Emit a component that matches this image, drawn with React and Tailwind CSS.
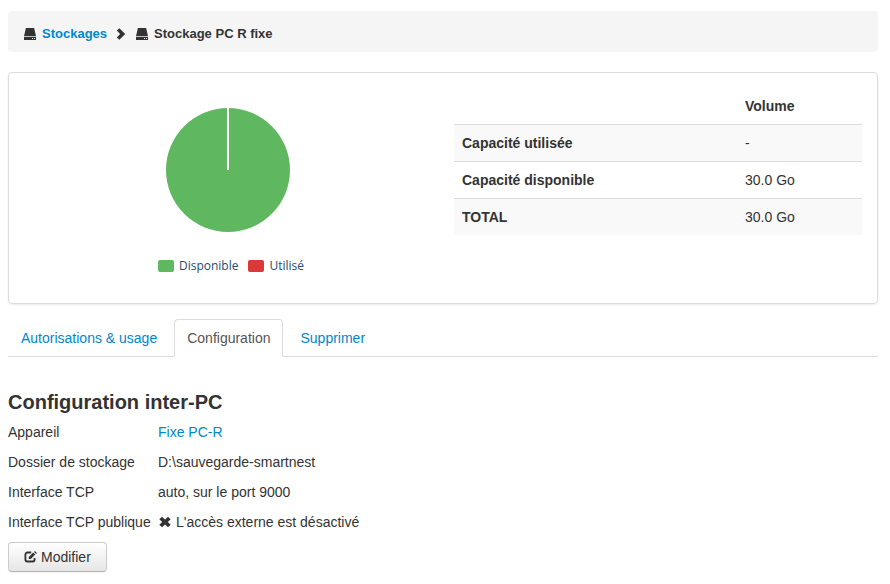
const SERIES = [
  { label: 'Disponible', swatch: 'bg-[#5fb760]' },
  { label: 'Utilisé', swatch: 'bg-[#db3838]' },
];

const VOLUMES = [
  { label: 'Capacité utilisée', value: '-' },
  { label: 'Capacité disponible', value: '30.0 Go' },
  { label: 'TOTAL', value: '30.0 Go' },
];

const TABS = [
  { label: 'Autorisations & usage', href: '#usage' },
  { label: 'Configuration', href: '#configuration', active: true },
  { label: 'Supprimer', href: '#supprimer' },
];

function DriveIcon() {
  return (
    <svg viewBox="0 0 12 12" className="h-3 w-3 shrink-0" fill="#333" aria-hidden="true">
      <path d="M1.9 0h8.2L12 8.2H0z" />
      <path fillRule="evenodd" d="M0 9h12v3H0zM8 10v1h1v-1zM10 10v1h1v-1z" />
    </svg>
  );
}

function ChevronIcon() {
  return (
    <svg viewBox="0 0 10 12" className="h-3 w-[10px] shrink-0" fill="#333" aria-hidden="true">
      <path d="M.8 2.6 3.4.2 9.2 6l-5.8 5.8L.8 9.4 4.1 6z" />
    </svg>
  );
}

function CrossIcon() {
  return (
    <svg viewBox="0 0 13 12" className="h-3 w-[13px] shrink-0" fill="#333" aria-hidden="true">
      <path d="M4 .7 7 3.5 10 .7l2.7 2.5L9.8 6l2.9 2.8-2.7 2.5-3-2.8-3 2.8-2.7-2.5L4.2 6 1.3 3.2z" />
    </svg>
  );
}

function EditIcon() {
  return (
    <svg viewBox="0 0 13 12" className="h-3 w-[13px] shrink-0" aria-hidden="true">
      <path
        d="M7.2 1.5H3.4a2 2 0 0 0-2 2v5a2 2 0 0 0 2 2h5.2a2 2 0 0 0 2-2V7"
        fill="none"
        stroke="#333"
        strokeWidth="1.8"
      />
      <path d="M4.8 8.1V6l4.4-4.4 2 2-4.4 4.5zM10.1.9l.8-.8 2 2-.8.8z" fill="#333" />
    </svg>
  );
}

function UsagePie() {
  return (
    <svg viewBox="0 0 124 124" className="h-[124px] w-[124px]" role="img" aria-label="Disponible : 100 %">
      <circle cx="62" cy="62" r="62" fill="#5fb760" />
      <path d="M62 0v62" stroke="#fff" strokeWidth="2" />
    </svg>
  );
}

function ConfigRow({ label, children }) {
  return (
    <div className="flex h-[30px] items-center">
      <dt className="w-[150px] shrink-0 whitespace-nowrap">{label}</dt>
      <dd className="flex items-center gap-[5px]">{children}</dd>
    </div>
  );
}

export default function App() {
  return (
    <div className="pt-[11px] pr-3 pb-3 pl-2 font-['Liberation_Sans',Arial,sans-serif] text-[14px] leading-5 text-[#333]">
      <nav
        aria-label="Fil d'Ariane"
        className="flex items-center rounded bg-[#f5f5f5] px-4 pt-3 pb-2 text-[13px] leading-[21px] font-bold"
      >
        <a href="#stockages" className="flex items-center gap-[6px] text-[#0088cc]">
          <DriveIcon />
          Stockages
        </a>
        <span className="pr-[10px] pl-[9px]">
          <ChevronIcon />
        </span>
        <span className="flex items-center gap-[6px]">
          <DriveIcon />
          Stockage PC R fixe
        </span>
      </nav>

      <section className="mt-5 flex gap-[22px] rounded border border-[#ddd] px-[15px] pt-[15px] pb-[27px] shadow-[0_1px_2px_rgba(0,0,0,0.075)]">
        <div className="flex flex-1 flex-col items-center pt-5">
          <UsagePie />
          <ul className="mt-6 ml-[6px] flex gap-[10px] font-['Open_Sans',sans-serif] text-[12px] leading-5 text-[#274b6d]">
            {SERIES.map((s) => (
              <li key={s.label} className="flex items-center gap-[5px]">
                <span className={`h-3 w-4 rounded-xs ${s.swatch}`} />
                {s.label}
              </li>
            ))}
          </ul>
        </div>

        <div className="flex-1">
          <table className="w-full table-fixed text-left">
            <thead>
              <tr>
                <td className="w-[283px] p-2" />
                <th className="p-2">Volume</th>
              </tr>
            </thead>
            <tbody>
              {VOLUMES.map((v) => (
                <tr key={v.label} className="border-t border-[#ddd] odd:bg-[#f9f9f9]">
                  <th className="p-2">{v.label}</th>
                  <td className="p-2">{v.value}</td>
                </tr>
              ))}
            </tbody>
          </table>
        </div>
      </section>

      <nav className="mt-[15px] flex gap-1 border-b border-[#ddd]">
        {TABS.map((t) => (
          <a
            key={t.label}
            href={t.href}
            aria-current={t.active ? 'page' : undefined}
            className={
              t.active
                ? '-mb-px rounded-t border border-[#ddd] border-b-white bg-white px-3 py-2 text-[#555]'
                : '-mb-px border border-transparent px-3 py-2 text-[#0088cc]'
            }
          >
            {t.label}
          </a>
        ))}
      </nav>

      <h1 className="mt-[30px] text-[20px] leading-[30px] font-bold">Configuration inter-PC</h1>
      <dl>
        <ConfigRow label="Appareil">
          <a href="#appareil" className="text-[#0088cc]">
            Fixe PC-R
          </a>
        </ConfigRow>
        <ConfigRow label="Dossier de stockage">D:\sauvegarde-smartnest</ConfigRow>
        <ConfigRow label="Interface TCP">auto, sur le port 9000</ConfigRow>
        <ConfigRow label="Interface TCP publique">
          <CrossIcon />
          L'accès externe est désactivé
        </ConfigRow>
      </dl>

      <button
        type="button"
        className="mt-[5px] flex items-center gap-1 rounded border border-[#ccc] border-b-[#b3b3b3] bg-linear-to-b from-white to-[#e6e6e6] px-[15px] py-1 shadow-[0_1px_2px_rgba(0,0,0,0.05)]"
      >
        <EditIcon />
        Modifier
      </button>
    </div>
  );
}
